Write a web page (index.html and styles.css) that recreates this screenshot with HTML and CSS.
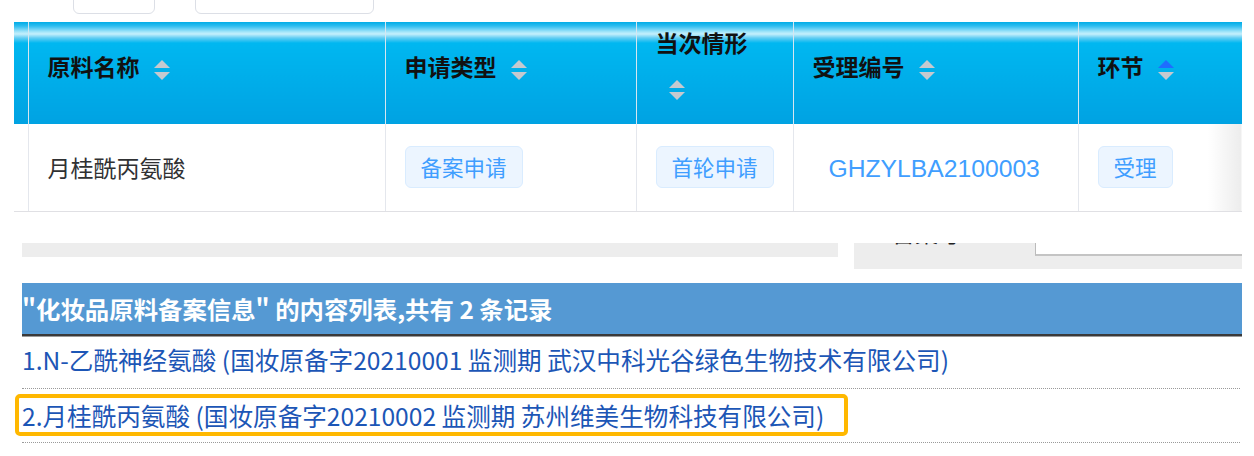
FILE: index.html
```html
<!DOCTYPE html>
<html lang="zh-CN">
<head>
    <meta charset="UTF-8">
    <meta name="viewport" content="width=device-width, initial-scale=1.0">
    <title>化妆品原料备案信息</title>
    <link rel="stylesheet" href="styles.css">
</head>
<body>
    <div class="search-top">
        <div class="fake-input small"></div>
        <div class="fake-input wide"></div>
    </div>

    <table class="data-table">
        <colgroup>
            <col style="width: 14px">
            <col style="width: 357px">
            <col style="width: 251px">
            <col style="width: 157px">
            <col style="width: 285px">
            <col style="width: 164px">
        </colgroup>
        <thead>
            <tr>
                <th class="check-col"></th>
                <th>原料名称<span class="caret"><i class="up"></i><i class="down"></i></span></th>
                <th>申请类型<span class="caret"><i class="up"></i><i class="down"></i></span></th>
                <th class="narrow">当次情形<br><span class="caret first"><i class="up"></i><i class="down"></i></span></th>
                <th>受理编号<span class="caret"><i class="up"></i><i class="down"></i></span></th>
                <th class="last">环节<span class="caret"><i class="up active"></i><i class="down"></i></span></th>
            </tr>
        </thead>
        <tbody>
            <tr>
                <td class="check-col"></td>
                <td>月桂酰丙氨酸</td>
                <td><span class="tag">备案申请</span></td>
                <td><span class="tag">首轮申请</span></td>
                <td><span class="link">GHZYLBA2100003</span></td>
                <td class="last"><span class="tag">受理</span></td>
            </tr>
        </tbody>
    </table>

    <div class="filter-strip">
        <div class="strip-left"></div>
        <div class="strip-right">
            <span class="strip-label">备案号</span>
            <div class="strip-input"></div>
        </div>
    </div>

    <div class="list-head">"化妆品原料备案信息" 的内容列表,共有 2 条记录</div>
    <ul class="result-list">
        <li><a href="#">1.N-乙酰神经氨酸 (国妆原备字20210001 监测期 武汉中科光谷绿色生物技术有限公司)</a></li>
        <li><a href="#" class="marked">2.月桂酰丙氨酸 (国妆原备字20210002 监测期 苏州维美生物科技有限公司)</a></li>
    </ul>
</body>
</html>
```

FILE: styles.css
```css
body {
    margin: 0;
    background-color: #fff;
    font-family: "Noto Sans CJK SC", "Liberation Sans", sans-serif;
}

.search-top {
    display: flex;
    height: 22px;
    overflow: hidden;
    padding-left: 73px;
}
.fake-input {
    height: 30px;
    margin-top: -16px;
    border: 1px solid #dcdfe6;
    border-radius: 6px;
    box-sizing: border-box;
}
.fake-input.small {
    width: 82px;
}
.fake-input.wide {
    width: 179px;
    margin-left: 40px;
}

.data-table {
    margin-left: 14px;
    width: 1228px;
    table-layout: fixed;
    border-collapse: collapse;
}
.data-table th {
    height: 102px;
    box-sizing: border-box;
    padding: 0 18px 6px 19px;
    text-align: left;
    vertical-align: middle;
    color: #111;
    font-size: 23px;
    font-weight: bold;
    line-height: 40px;
    border-right: 1px solid #d6e6f0;
    background: linear-gradient(to bottom, #00ace6 0px, #2dbdf0 4px, #a6e6fa 10px, #c4effc 12px, #62cdf3 16px, #00b7f0 21px, #00aeea 55px, #00a2e2 100%);
}
.data-table th.check-col {
    padding: 0;
}
.data-table th.last,
.data-table td.last {
    border-right: none;
}

.caret {
    display: inline-flex;
    flex-direction: column;
    justify-content: center;
    gap: 4px;
    height: 56px;
    margin-left: 14px;
    vertical-align: middle;
}
.caret.first {
    margin-left: 13px;
}
.caret i {
    display: block;
    width: 0;
    height: 0;
    border-left: 8px solid transparent;
    border-right: 8px solid transparent;
}
.caret .up {
    border-bottom: 8px solid #c6c9cf;
}
.caret .down {
    border-top: 8px solid #c6c9cf;
}
.caret .up.active {
    border-bottom-color: #1f6dff;
}

.data-table td {
    height: 87px;
    box-sizing: border-box;
    padding: 0 18px 0 19px;
    color: #303133;
    font-size: 23px;
    border-right: 1px solid #e4e7ed;
    border-bottom: 1px solid #e0e0e4;
    vertical-align: middle;
}
.data-table td.check-col {
    padding: 0;
}
.data-table td.last {
    background: linear-gradient(to right, #fff 0px, #fff 130px, #ececec 100%);
}

.tag {
    display: inline-block;
    height: 42px;
    line-height: 40px;
    padding: 0 15px;
    box-sizing: border-box;
    font-size: 21.5px;
    color: #409eff;
    background-color: #ecf5ff;
    border: 1px solid #d9ecff;
    border-radius: 6px;
}
.link {
    margin-left: 16px;
    color: #409eff;
    font-family: "Liberation Sans", sans-serif;
    font-size: 24.7px;
}

.filter-strip {
    display: flex;
    margin-top: 31px;
    padding-left: 22px;
}
.strip-left {
    width: 816px;
    height: 14px;
    background-color: #ededed;
}
.strip-right {
    display: flex;
    width: 388px;
    height: 26px;
    margin-left: 16px;
    overflow: hidden;
    background-color: #ededed;
}
.strip-label {
    margin: -28px 0 0 38px;
    font-size: 23px;
    line-height: 34px;
    color: #222;
}
.strip-input {
    width: 206px;
    height: 11px;
    margin-left: auto;
    background-color: #fff;
    border-left: 1px solid #bbb;
    border-bottom: 2px solid #c4c4c4;
}

.list-head {
    margin: 14px 12px 0 22px;
    height: 51px;
    line-height: 51px;
    color: #fff;
    font-size: 24.4px;
    font-weight: bold;
    background-color: #5599d3;
    border-bottom: 2px solid #3a3a3a;
    box-shadow: 0 1px 0 #9a9a9a;
}

.result-list {
    list-style: none;
    margin: 0 14px 0 22px;
    padding: 0;
}
.result-list li {
    height: 53px;
    line-height: 50px;
    border-bottom: 1px dotted #9a9a9a;
}
.result-list li:first-child {
    height: 52px;
    line-height: 46px;
}
.result-list a {
    color: #1c56b6;
    font-size: 24.6px;
    text-decoration: none;
}
.result-list a.marked {
    display: inline-block;
    margin: 5px 0 0 -7px;
    padding: 0 20px 0 3px;
    height: 42px;
    line-height: 34px;
    border: 4px solid #ffb800;
    border-radius: 5px;
    box-sizing: border-box;
}
```
